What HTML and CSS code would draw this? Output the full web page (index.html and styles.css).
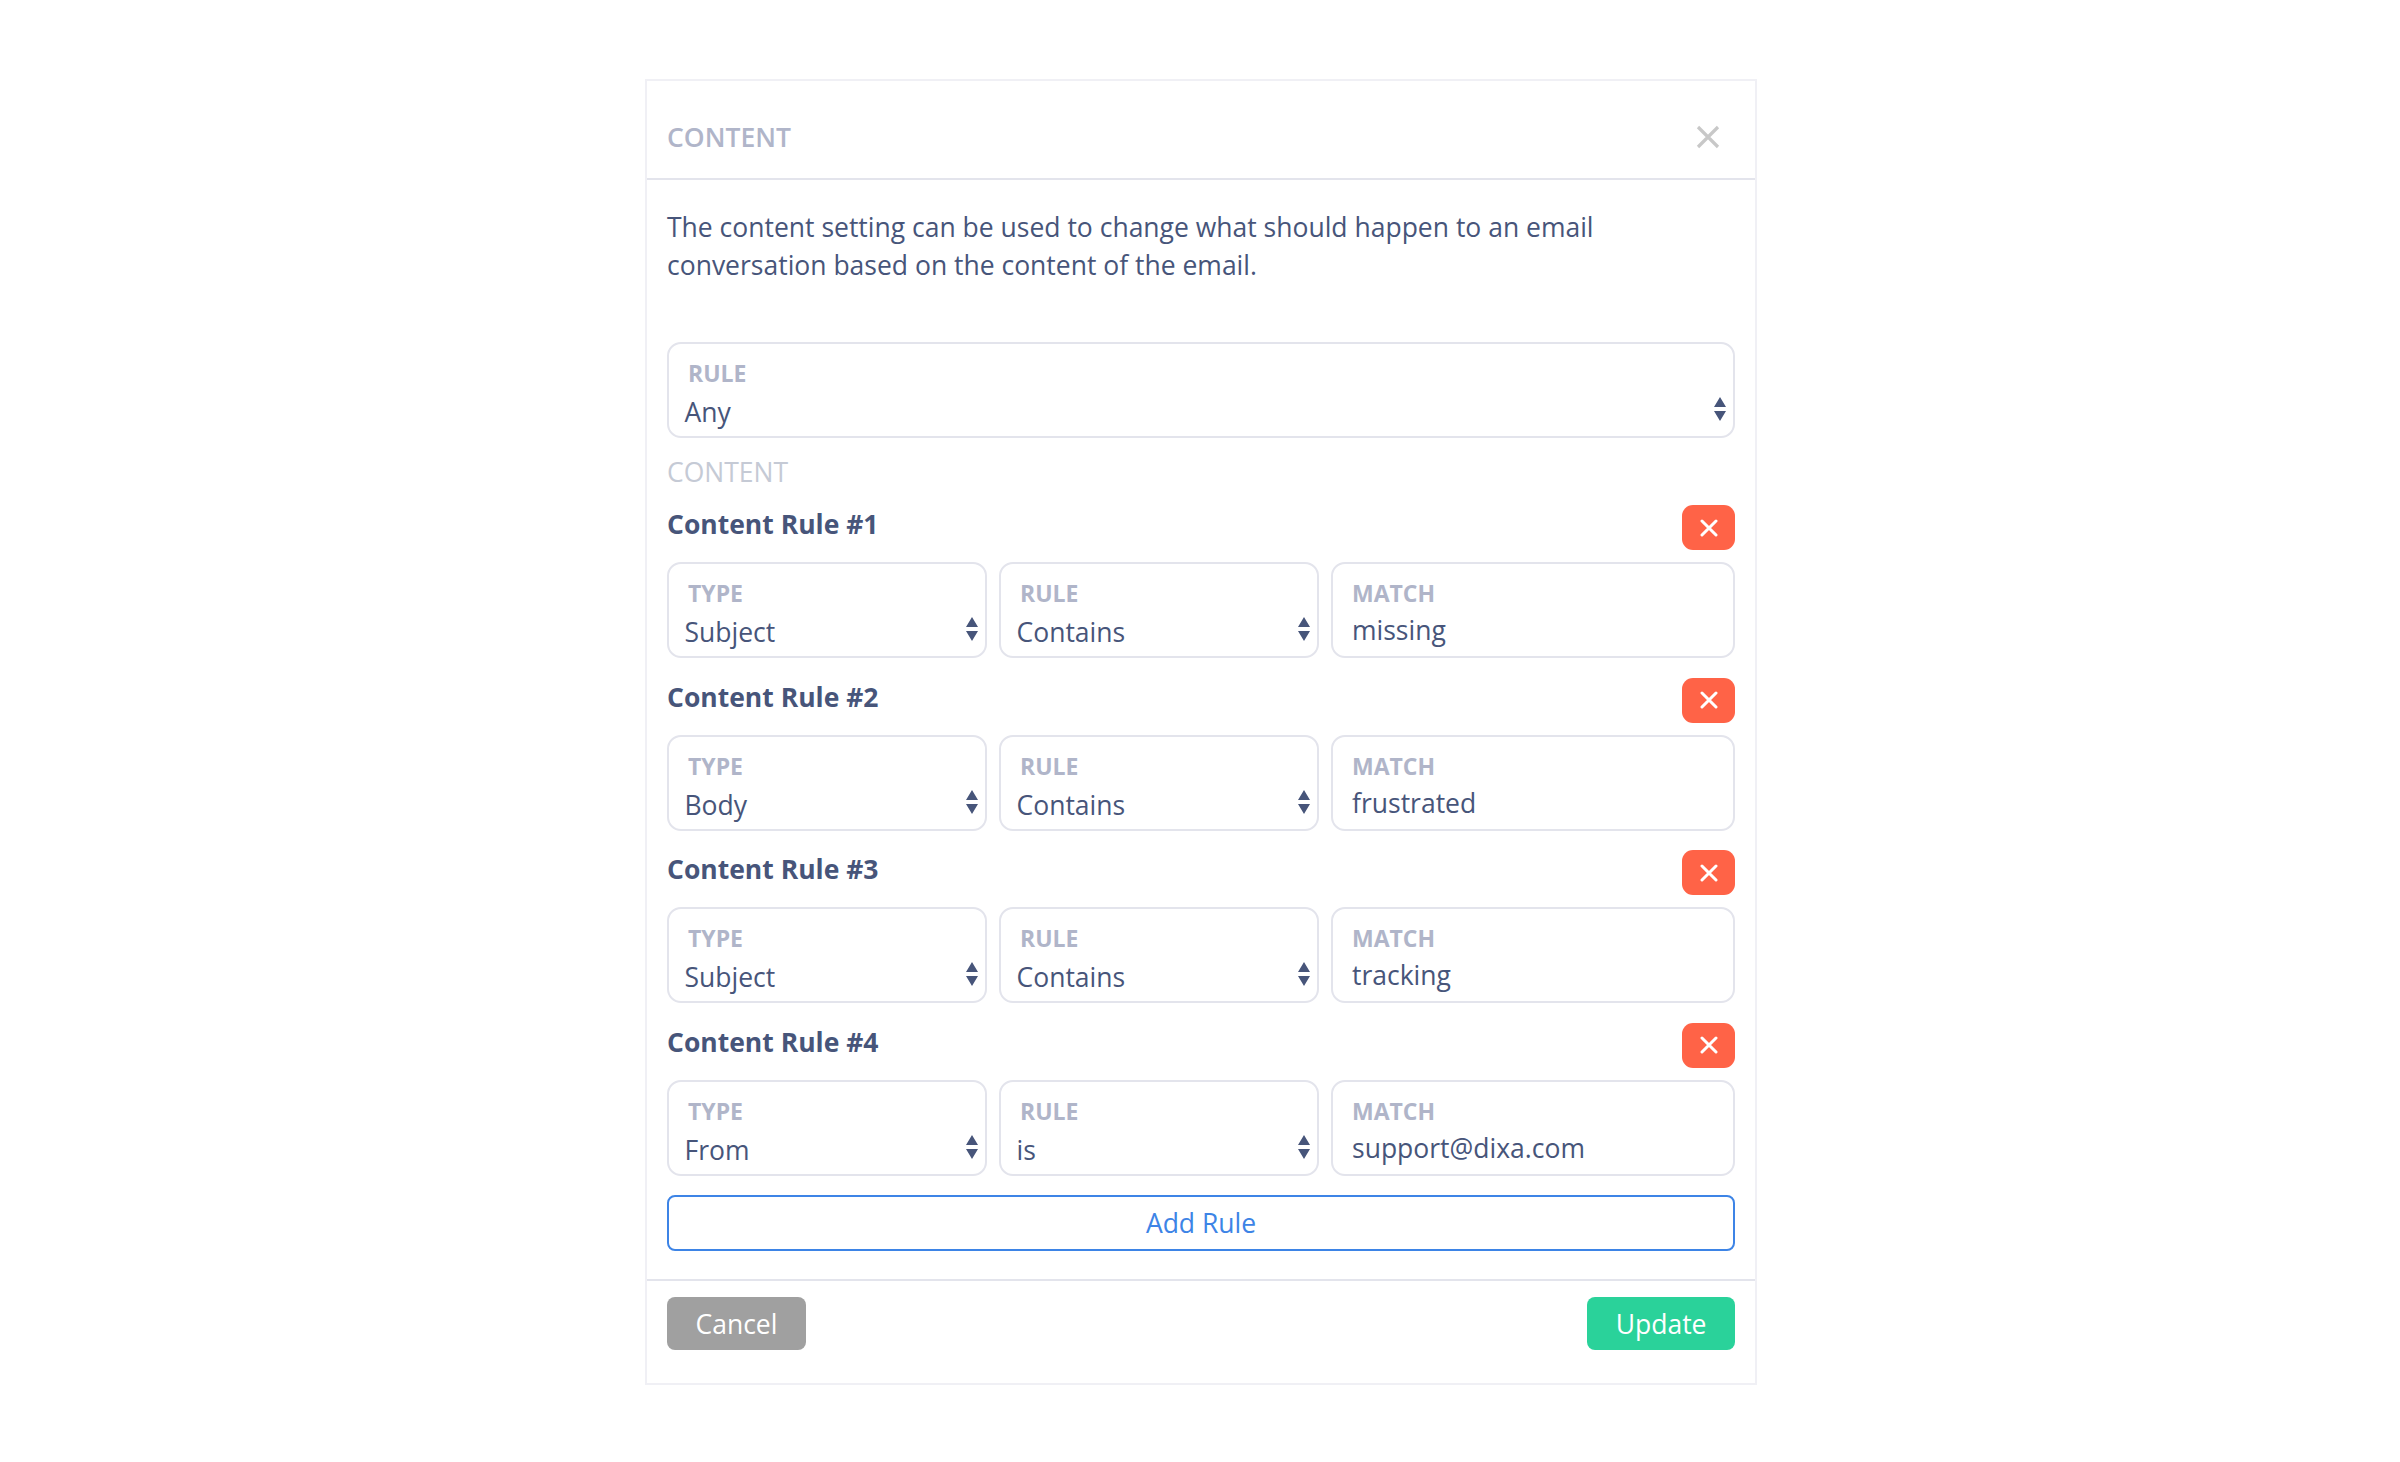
FILE: index.html
```html
<!DOCTYPE html>
<html lang="en">
<head>
    <meta charset="UTF-8">
    <title>Content</title>
    <link rel="stylesheet" href="styles.css">
</head>
<body>

<div class="modal">
    <div class="modal-header">
        <span class="modal-title">CONTENT</span>
        <svg class="close-icon" width="24" height="24" viewBox="0 0 24 24"><path d="M2 2L22 22M22 2L2 22"/></svg>
    </div>

    <div class="modal-body">
        <p class="intro">The content setting can be used to change what should happen to an email conversation based on the content of the email.</p>

        <div class="field select-field">
            <span class="field-label">RULE</span>
            <span class="field-value">Any</span>
            <svg class="arrows" width="12" height="24" viewBox="0 0 12 24"><path d="M6 0L12 10H0ZM0 14H12L6 24Z"/></svg>
        </div>

        <div class="section-title">CONTENT</div>

        <div class="rule">
            <div class="rule-head">
                <span class="rule-name">Content Rule #1</span>
                <button class="remove"><svg width="18" height="18" viewBox="0 0 18 18"><path d="M2 2L16 16M16 2L2 16"/></svg></button>
            </div>
            <div class="rule-fields">
                <div class="field select-field"><span class="field-label">TYPE</span><span class="field-value">Subject</span><svg class="arrows" width="12" height="24" viewBox="0 0 12 24"><path d="M6 0L12 10H0ZM0 14H12L6 24Z"/></svg></div>
                <div class="field select-field"><span class="field-label">RULE</span><span class="field-value">Contains</span><svg class="arrows" width="12" height="24" viewBox="0 0 12 24"><path d="M6 0L12 10H0ZM0 14H12L6 24Z"/></svg></div>
                <div class="field match-field"><span class="field-label">MATCH</span><span class="field-value">missing</span></div>
            </div>
        </div>

        <div class="rule">
            <div class="rule-head">
                <span class="rule-name">Content Rule #2</span>
                <button class="remove"><svg width="18" height="18" viewBox="0 0 18 18"><path d="M2 2L16 16M16 2L2 16"/></svg></button>
            </div>
            <div class="rule-fields">
                <div class="field select-field"><span class="field-label">TYPE</span><span class="field-value">Body</span><svg class="arrows" width="12" height="24" viewBox="0 0 12 24"><path d="M6 0L12 10H0ZM0 14H12L6 24Z"/></svg></div>
                <div class="field select-field"><span class="field-label">RULE</span><span class="field-value">Contains</span><svg class="arrows" width="12" height="24" viewBox="0 0 12 24"><path d="M6 0L12 10H0ZM0 14H12L6 24Z"/></svg></div>
                <div class="field match-field"><span class="field-label">MATCH</span><span class="field-value">frustrated</span></div>
            </div>
        </div>

        <div class="rule">
            <div class="rule-head">
                <span class="rule-name">Content Rule #3</span>
                <button class="remove"><svg width="18" height="18" viewBox="0 0 18 18"><path d="M2 2L16 16M16 2L2 16"/></svg></button>
            </div>
            <div class="rule-fields">
                <div class="field select-field"><span class="field-label">TYPE</span><span class="field-value">Subject</span><svg class="arrows" width="12" height="24" viewBox="0 0 12 24"><path d="M6 0L12 10H0ZM0 14H12L6 24Z"/></svg></div>
                <div class="field select-field"><span class="field-label">RULE</span><span class="field-value">Contains</span><svg class="arrows" width="12" height="24" viewBox="0 0 12 24"><path d="M6 0L12 10H0ZM0 14H12L6 24Z"/></svg></div>
                <div class="field match-field"><span class="field-label">MATCH</span><span class="field-value">tracking</span></div>
            </div>
        </div>

        <div class="rule">
            <div class="rule-head">
                <span class="rule-name">Content Rule #4</span>
                <button class="remove"><svg width="18" height="18" viewBox="0 0 18 18"><path d="M2 2L16 16M16 2L2 16"/></svg></button>
            </div>
            <div class="rule-fields">
                <div class="field select-field"><span class="field-label">TYPE</span><span class="field-value">From</span><svg class="arrows" width="12" height="24" viewBox="0 0 12 24"><path d="M6 0L12 10H0ZM0 14H12L6 24Z"/></svg></div>
                <div class="field select-field"><span class="field-label">RULE</span><span class="field-value">is</span><svg class="arrows" width="12" height="24" viewBox="0 0 12 24"><path d="M6 0L12 10H0ZM0 14H12L6 24Z"/></svg></div>
                <div class="field match-field"><span class="field-label">MATCH</span><span class="field-value">support@dixa.com</span></div>
            </div>
        </div>

        <button class="add-rule">Add Rule</button>
    </div>

    <div class="modal-footer">
        <button class="btn btn-cancel">Cancel</button>
        <button class="btn btn-update">Update</button>
    </div>
</div>

</body>
</html>
```

FILE: styles.css
```css
body {
    font-family: 'Open Sans', sans-serif;
    margin: 0;
    padding: 0;
    background-color: #ffffff;
    color: #47557a;
}
.modal {
    box-sizing: border-box;
    width: 1112px;
    height: 1306px;
    margin: 79px 0 0 645px;
    border: 2px solid #f0f0f5;
    display: flex;
    flex-direction: column;
}
.modal-header {
    height: 99px;
    box-sizing: border-box;
    padding: 15px 20px 0;
    border-bottom: 2px solid #e3e4ec;
    display: flex;
    align-items: center;
    justify-content: space-between;
}
.modal-title {
    font-size: 26.5px;
    font-weight: 600;
    color: #b0b5c9;
}
.close-icon {
    margin-right: 15px;
}
.close-icon path {
    stroke: #c8c8c8;
    stroke-width: 3.2;
    fill: none;
}
.modal-body {
    flex: 1;
    padding: 28px 20px 0;
}
.intro {
    margin: 0 0 58px;
    font-size: 26.5px;
    line-height: 38px;
}
.field {
    box-sizing: border-box;
    height: 96px;
    border: 2px solid #e3e4ec;
    border-radius: 14px;
    background: #ffffff;
    position: relative;
    display: flex;
    flex-direction: column;
    padding: 14px 0 0 19px;
}
.field-label {
    font-size: 23px;
    line-height: 30px;
    font-weight: 700;
    color: #b0b5c9;
}
.field-value {
    font-size: 26.5px;
    line-height: 38px;
    margin-top: 5px;
    margin-left: -3.5px;
}
.match-field .field-value {
    margin-left: 0;
    margin-top: 3px;
}
.arrows {
    position: absolute;
    right: 7px;
    bottom: 15px;
}
.arrows path {
    fill: #47557a;
}
.section-title {
    font-size: 26.5px;
    color: #c5cad5;
    line-height: 38px;
    margin: 15px 0 14px;
}
.rule {
    margin-bottom: 19.5px;
}
.rule-head {
    display: flex;
    justify-content: space-between;
    align-items: flex-start;
    height: 57px;
}
.rule-name {
    font-size: 26.5px;
    font-weight: 700;
    line-height: 38px;
}
.remove {
    width: 53px;
    height: 45px;
    border: none;
    border-radius: 11px;
    background-color: #ff6347;
    padding: 0;
    display: flex;
    align-items: center;
    justify-content: center;
}
.remove path {
    stroke: #ffffff;
    stroke-width: 3;
    stroke-linecap: round;
    fill: none;
}
.rule-fields {
    display: grid;
    grid-template-columns: 319.5px 319.5px 1fr;
    gap: 12.5px;
}
.add-rule {
    display: block;
    width: 100%;
    height: 56px;
    border: 2px solid #3d84e6;
    border-radius: 8px;
    background: #ffffff;
    color: #3d84e6;
    font-family: inherit;
    font-size: 26.5px;
}
.modal-footer {
    box-sizing: border-box;
    height: 104px;
    padding: 16px 20px 0;
    border-top: 2px solid #e3e4ec;
    display: flex;
    justify-content: space-between;
    align-items: flex-start;
}
.btn {
    height: 53px;
    border: none;
    border-radius: 8px;
    color: #ffffff;
    font-family: inherit;
    font-size: 26.5px;
    padding: 0 28.5px;
}
.btn-cancel {
    background-color: #a0a0a0;
}
.btn-update {
    background-color: #2ad29a;
}
```
